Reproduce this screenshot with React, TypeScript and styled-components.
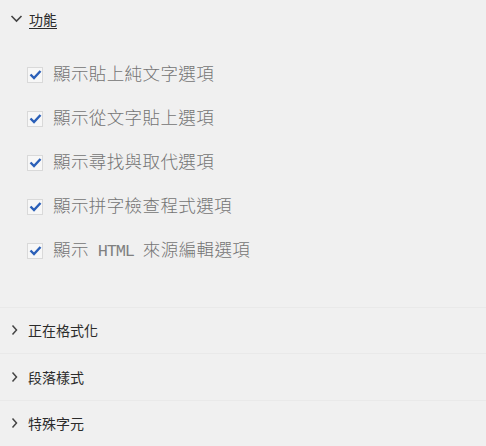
import React from "react";
import styled, { createGlobalStyle } from "styled-components";

const Global = createGlobalStyle`
  html, body { margin: 0; padding: 0; background: #f0f0f0; }
  body { font-family: "Noto Sans CJK TC", "Liberation Sans", sans-serif; }
`;

const Panel = styled.div`
  width: 486px;
  height: 446px;
  background: #f0f0f0;
  display: flex;
  flex-direction: column;
  overflow: hidden;
`;

const Header = styled.div`
  height: 38px;
  display: flex;
  align-items: center;
  padding-left: 10px;
  gap: 6px;
  box-sizing: border-box;
`;

const HeaderTitle = styled.span`
  font-size: 14px;
  color: #2b2b2b;
  text-decoration: underline;
  text-underline-offset: 3px;
  line-height: 1;
`;

const OptionList = styled.div`
  display: flex;
  flex-direction: column;
  padding: 15px 0 34px 27px;
`;

const OptionRow = styled.label`
  height: 44px;
  display: flex;
  align-items: center;
  gap: 10px;
`;

const Box = styled.span`
  width: 16px;
  height: 16px;
  box-sizing: border-box;
  border: 1px solid #d9d9d9;
  background: #f7f7f7;
  display: flex;
  align-items: center;
  justify-content: center;
`;

const OptionText = styled.span`
  font-family: "Liberation Serif", "Noto Sans CJK TC", serif;
  font-size: 17.5px;
  font-weight: 300;
  color: #747474;
  letter-spacing: 0.4px;
  line-height: 1;
  white-space: pre;
`;

const Latin = styled.span`
  font-family: "Liberation Mono", monospace;
  font-size: 17px;
  font-weight: 400;
  letter-spacing: -1.2px;
  color: #808080;
`;

const Section = styled.div`
  height: 47px;
  box-sizing: border-box;
  border-top: 1px solid #e9e9e9;
  display: flex;
  align-items: center;
  padding-left: 11px;
  gap: 10px;
`;

const SectionTitle = styled.span`
  font-size: 14px;
  color: #2b2b2b;
  line-height: 1;
`;

const ChevronDown = () => (
  <svg width="13" height="9" viewBox="0 0 13 9">
    <path d="M1.5 2 L6.5 7 L11.5 2" fill="none" stroke="#444" strokeWidth="1.6" />
  </svg>
);

const ChevronRight = () => (
  <svg width="7" height="12" viewBox="0 0 7 12">
    <path d="M1.5 1.5 L5.5 6 L1.5 10.5" fill="none" stroke="#444" strokeWidth="1.5" />
  </svg>
);

const Check = () => (
  <svg width="13" height="11" viewBox="0 0 13 11">
    <path d="M1.5 5.5 L5 9 L11.5 2" fill="none" stroke="#2a5fb8" strokeWidth="2.4" />
  </svg>
);

const options: { text: string; latin?: string; rest?: string }[] = [
  { text: "顯示貼上純文字選項" },
  { text: "顯示從文字貼上選項" },
  { text: "顯示尋找與取代選項" },
  { text: "顯示拼字檢查程式選項" },
  { text: "顯示", latin: " HTML ", rest: "來源編輯選項" },
];

const sections = ["正在格式化", "段落樣式", "特殊字元"];

export default function App() {
  return (
    <Panel>
      <Global />
      <Header>
        <ChevronDown />
        <HeaderTitle>功能</HeaderTitle>
      </Header>
      <OptionList>
        {options.map((o, i) => (
          <OptionRow key={i}>
            <Box>
              <Check />
            </Box>
            <OptionText>
              {o.text}
              {o.latin && <Latin>{o.latin}</Latin>}
              {o.rest}
            </OptionText>
          </OptionRow>
        ))}
      </OptionList>
      {sections.map((s) => (
        <Section key={s}>
          <ChevronRight />
          <SectionTitle>{s}</SectionTitle>
        </Section>
      ))}
    </Panel>
  );
}
